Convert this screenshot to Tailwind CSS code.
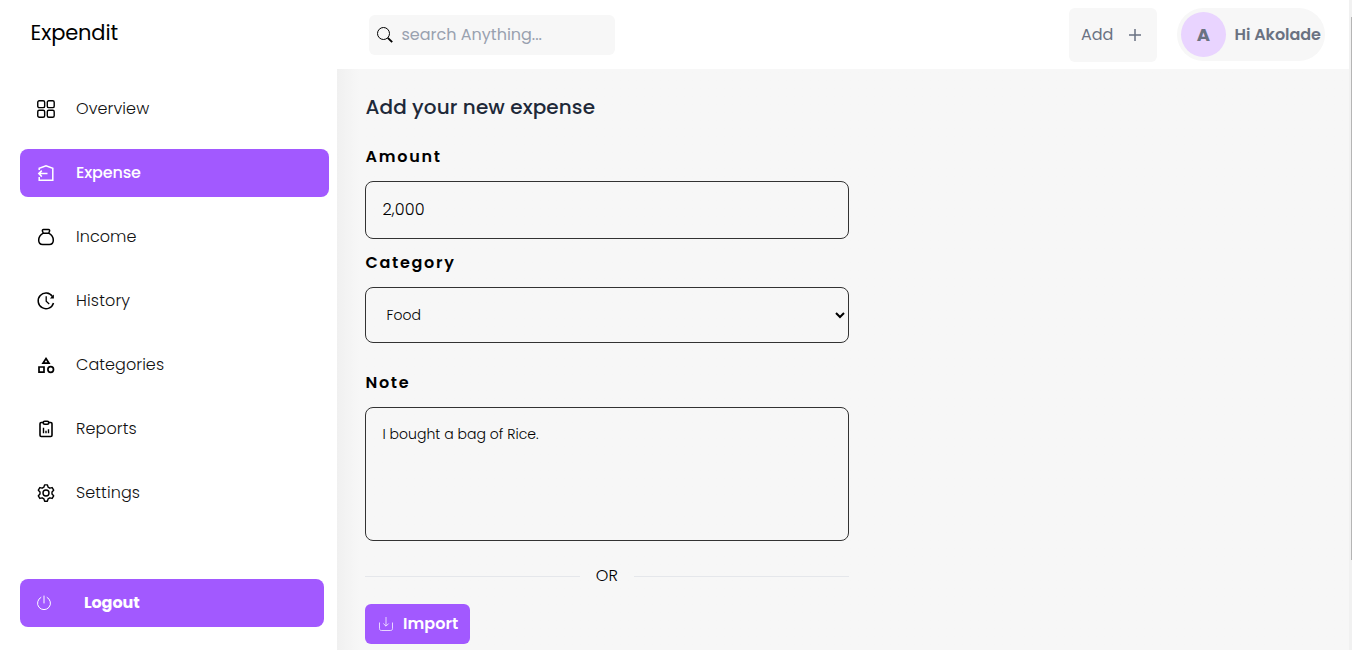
<!DOCTYPE html>
<html lang="en">
<head>
<meta charset="utf-8">
<title>Expendit</title>
<script src="https://cdn.jsdelivr.net/npm/@tailwindcss/browser@4"></script>
</head>
<body class="h-[650px] w-[1352px] overflow-hidden bg-white font-['Poppins','Inter',sans-serif] text-base text-black">
<div class="flex h-full">
  <div class="flex h-full w-[1349px] flex-col">
    <header class="flex h-[69px] shrink-0 items-start">
      <div class="w-[369px] pt-[18px] pl-[30.6px] text-[21px] leading-[30px]"><span class="tracking-[-0.15px]">Expendit</span></div>
      <div class="mt-[15px] flex h-10 w-[246px] items-center gap-[8.5px] rounded-md bg-[#f7f7f7] pl-2 text-gray-400">
        <svg class="size-4 text-black" viewBox="0 0 16 16" fill="none" stroke="currentColor"><circle cx="6.5" cy="6.5" r="6"/><path d="M10.8 10.8l4.4 4.4" stroke-width="1.9"/></svg>
        <span>search Anything...</span>
      </div>
      <div class="mt-2 ml-auto flex h-[54px] w-[88px] items-center rounded-md bg-[#f7f7f7] pl-3 text-gray-500">
        <span class="w-[47px]">Add</span>
        <svg class="size-3.5" viewBox="0 0 14 14" stroke="currentColor" stroke-width="1.5"><path d="M7 1v12M1 7h12"/></svg>
      </div>
      <div class="mt-2 mr-6 ml-5 flex h-[53px] w-[148px] items-center rounded-full bg-[#f7f7f7] pl-1 font-semibold text-gray-500">
        <span class="flex size-[45px] shrink-0 items-center justify-center rounded-full bg-purple-200 text-lg font-bold">A</span>
        <span class="ml-[8.5px] whitespace-nowrap tracking-[-0.03px]">Hi Akolade</span>
      </div>
    </header>
    <div class="flex min-h-0 flex-1">
      <aside class="flex w-[337px] shrink-0 flex-col pt-4 pl-5 font-light text-[#111]">
        <nav class="flex flex-col gap-4">
          <a class="flex h-12 w-[309px] items-center gap-5 rounded-lg pl-4">
            <svg class="size-5 text-black" viewBox="0 0 20 20" fill="none" stroke="currentColor" stroke-width="1.4"><rect x="1.75" y="1.75" width="6.9" height="6.9" rx="1.5"/><rect x="11.3" y="1.75" width="6.9" height="6.9" rx="1.5"/><rect x="1.75" y="11.3" width="6.9" height="6.9" rx="1.5"/><rect x="11.3" y="11.3" width="6.9" height="6.9" rx="1.5"/></svg>
            <span class="tracking-[0.1px]">Overview</span>
          </a>
          <a class="flex h-12 w-[309px] items-center gap-5 rounded-lg bg-[#a259ff] pl-4 font-medium text-white">
            <svg class="size-5" viewBox="0 0 20 20" fill="none" stroke="currentColor" stroke-width="1.5"><path d="M3.2 7V5.3L10 2.7l6.8 2.6v12H3.2V14M11.5 10.6H3M5.8 7.6l-3 3 3 3"/></svg>
            <span class="tracking-[-0.15px]">Expense</span>
          </a>
          <a class="flex h-12 w-[309px] items-center gap-5 rounded-lg pl-4">
            <svg class="size-5 text-black" viewBox="0 0 20 20" fill="none" stroke="currentColor" stroke-width="1.5" stroke-linejoin="round"><path d="M7.3 6.2L6.5 4.3c-.4-1 0-1.8 1-1.8h5c1 0 1.4.8 1 1.8l-.8 1.9zM7.3 6.2C4.6 7.6 2.7 10.4 2.7 13.2c0 2.8 1.3 4.2 4 4.2h6.6c2.7 0 4-1.4 4-4.2 0-2.8-1.9-5.6-4.6-7"/></svg>
            <span class="tracking-[0.05px]">Income</span>
          </a>
          <a class="flex h-12 w-[309px] items-center gap-5 rounded-lg pl-4">
            <svg class="size-5 text-black" viewBox="0 0 20 20" fill="none" stroke="currentColor" stroke-width="1.5"><path d="M17.5 12A7.8 7.8 0 1 1 16.5 5.6"/><path d="M10.2 5.3v5l3 2.6" stroke-width="1.3"/><path d="M17.9 3.4v4h-4z" fill="currentColor" stroke="none"/></svg>
            <span class="tracking-[0.15px]">History</span>
          </a>
          <a class="flex h-12 w-[309px] items-center gap-5 rounded-lg pl-4">
            <svg class="size-5 text-black" viewBox="0 0 20 20" fill="none" stroke="currentColor" stroke-width="1.7"><path d="M10 3.5L13 8.2H7zM3 12h5v5.2H3z"/><circle cx="14.7" cy="14.5" r="2.8"/></svg>
            <span class="tracking-[0.07px]">Categories</span>
          </a>
          <a class="flex h-12 w-[309px] items-center gap-5 rounded-lg pl-4">
            <svg class="size-5 text-black" viewBox="0 0 20 20" fill="none" stroke="currentColor" stroke-width="1.6"><path d="M7 3.5H5.2C4.4 3.5 4 4 4 4.7v11.6c0 .8.4 1.2 1.2 1.2h9.6c.8 0 1.2-.4 1.2-1.2V4.7c0-.7-.4-1.2-1.2-1.2H13"/><rect x="7.2" y="2.3" width="5.6" height="3" rx="1.5"/><path d="M7.5 8.8v5.4M10 11.8v2.4M12.5 10.2v4" stroke-width="1.4"/></svg>
            <span class="tracking-[0.1px]">Reports</span>
          </a>
          <a class="flex h-12 w-[309px] items-center gap-5 rounded-lg pl-4">
            <svg class="size-5 text-black" viewBox="0 0 24 24" fill="none" stroke="currentColor" stroke-width="1.7" stroke-linejoin="round"><circle cx="12" cy="12" r="3.6"/><path d="M10.3 2.2h3.4l.8 2.8 2.1 1.2 2.8-.7 1.8 3.1-2 2.1v2.6l2 2.1-1.8 3.1-2.8-.7-2.1 1.2-.8 2.8h-3.4l-.8-2.8-2.1-1.2-2.8.7-1.8-3.1 2-2.1v-2.6l-2-2.1 1.8-3.1 2.8.7L9.500 5z"/></svg>
            <span class="tracking-[0.1px]">Settings</span>
          </a>
        </nav>
        <button class="mt-[62px] flex h-12 w-[304px] items-center gap-8 rounded-lg bg-[#a259ff] pl-4 font-bold text-white">
          <svg class="size-4" viewBox="0 0 16 16" fill="none" stroke="currentColor" stroke-linecap="round"><path d="M8 1v7M4.9 2.4a6.5 6.5 0 1 0 6.2 0"/></svg>
          <span class="tracking-[-0.1px]">Logout</span>
        </button>
      </aside>
      <main class="flex-1 overflow-hidden bg-[#f7f7f7] bg-linear-to-r from-[#f0f0f0] to-[#f7f7f7] to-[22px] pt-[23px] pl-7">
        <form class="w-[483.6px]">
          <h1 class="pl-[0.5px] text-xl leading-[30px] font-medium text-gray-800"><span class="tracking-[0.09px]">Add your new expense</span></h1>
          <label class="mt-[23px] block h-6 pl-[0.5px] font-semibold"><span class="tracking-[1.75px]">Amount</span></label>
          <input class="mt-3 block h-[58px] w-full rounded-lg border border-[#333] pr-4 pb-0.5 pl-[16.5px] font-light tracking-[0.15px]" value="2,000">
          <label class="mt-3 block h-6 pl-[0.5px] font-semibold"><span class="tracking-[1.7px]">Category</span></label>
          <select class="mt-3 block h-14 w-full rounded-lg border border-[#333] bg-transparent pl-[16.5px] text-sm font-light"><option>Food</option></select>
          <label class="mt-[28px] block h-6 pl-[0.5px] font-semibold"><span class="tracking-[1.7px]">Note</span></label>
          <textarea class="mt-3 block h-[134px] w-full resize-none rounded-lg border border-[#333] p-4 pl-[16.5px] text-sm font-light tracking-[0.02px]">I bought a bag of Rice.</textarea>
          <div class="mt-[23px] flex h-6 items-center gap-4 font-light">
            <span class="h-px flex-1 bg-gray-200"></span><span class="w-[22px]">OR</span><span class="h-px flex-1 bg-gray-200"></span>
          </div>
          <button type="button" class="mt-4 flex h-10 w-[105px] items-center gap-2.5 rounded-md bg-[#a259ff] pl-3.5 font-semibold text-white">
            <svg class="size-3.5 shrink-0" viewBox="0 0 14 14" fill="none" stroke="currentColor" stroke-opacity=".75"><path d="M.5 5.5v6c0 1.3.7 2 2 2h9c1.3 0 2-.7 2-2v-6M7 0v9M4.3 6.5L7 9.2l2.7-2.7"/></svg>
            <span class="tracking-[0.05px]">Import</span>
          </button>
        </form>
      </main>
    </div>
  </div>
  <div class="w-[3px] bg-[#f1f1f1] pt-[17px] pl-0.5"><div class="h-[543px] w-px bg-[#b5b5b5]"></div></div>
</div>
</body>
</html>
